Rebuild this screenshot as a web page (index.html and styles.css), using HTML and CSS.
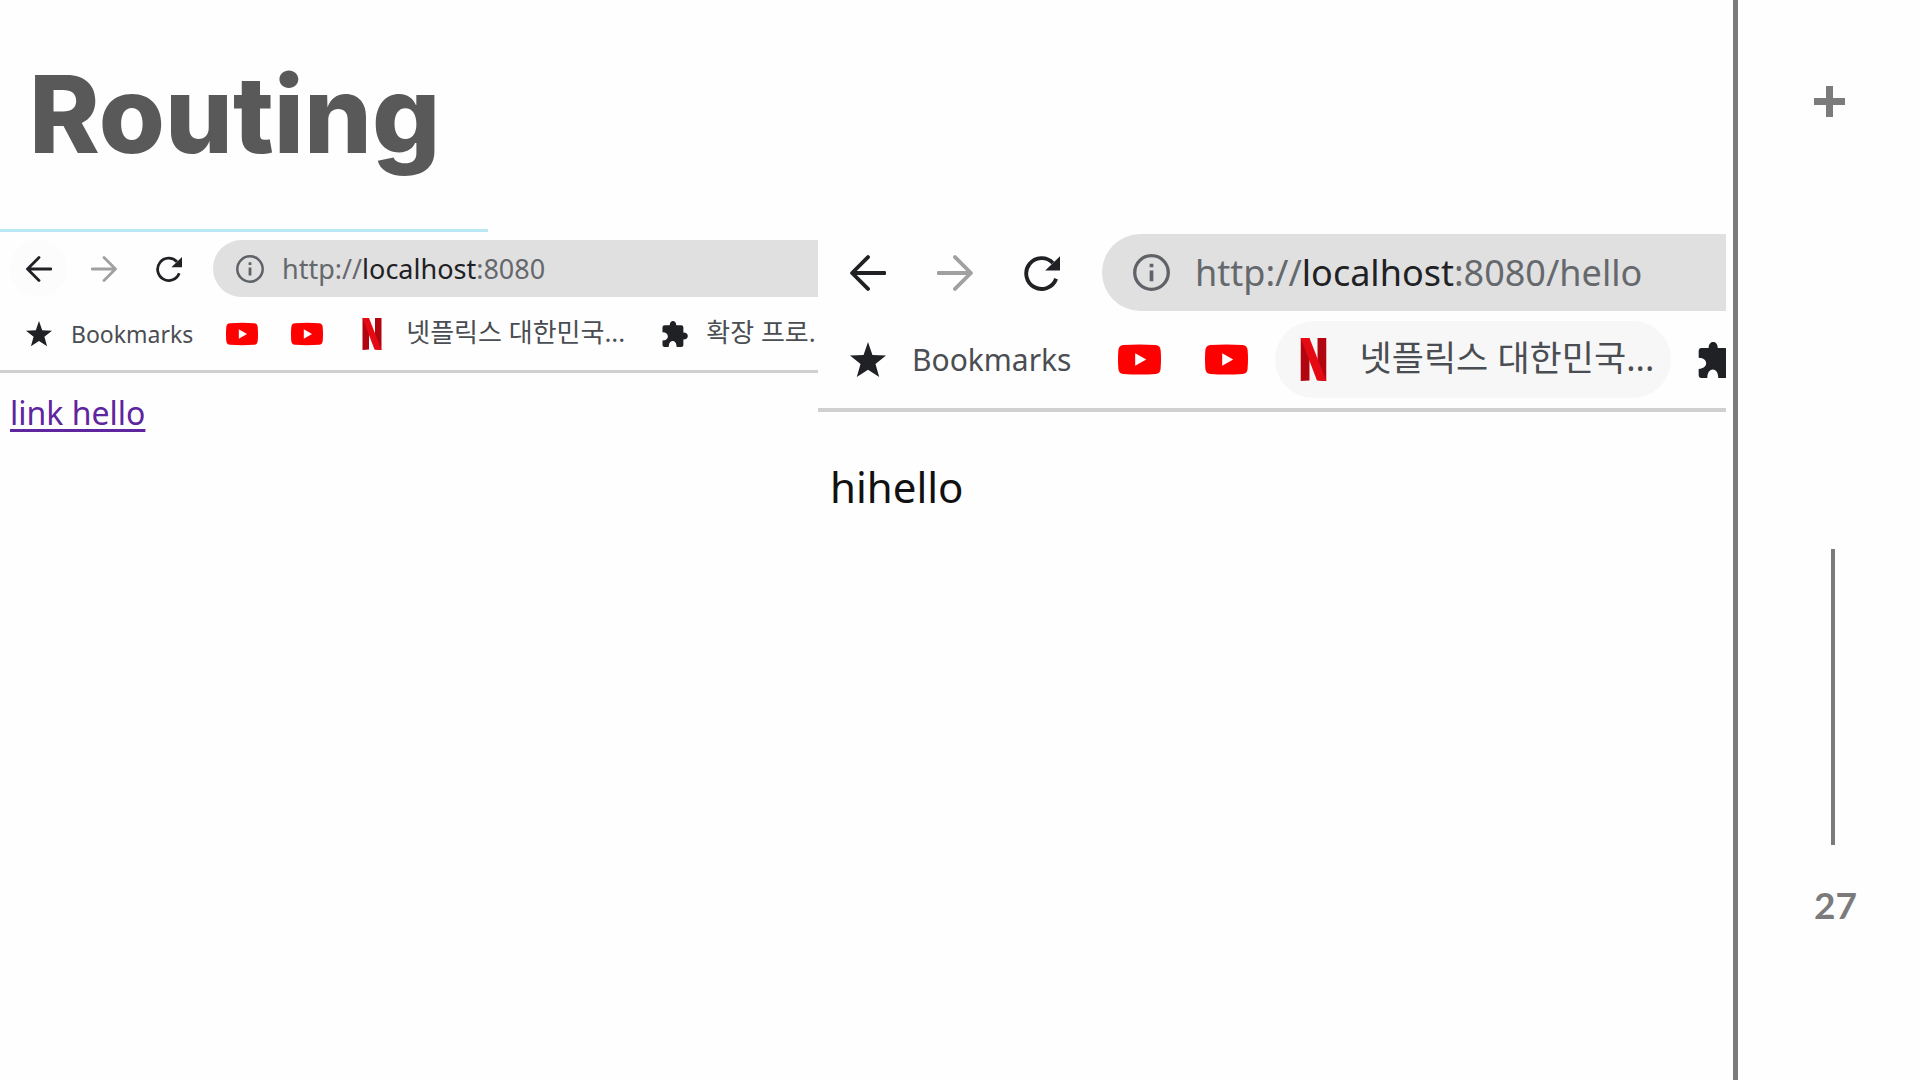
FILE: index.html
```html
<!DOCTYPE html>
<html lang="ko">
<head>
<meta charset="utf-8">
<meta name="viewport" content="width=device-width, initial-scale=1">
<title>Routing</title>
<link rel="stylesheet" href="styles.css">
</head>
<body>
<svg class="sprite" aria-hidden="true">
  <symbol id="back" viewBox="0 0 26 26"><path d="M13 1.500L1.500 13L13 24.500M2 13H25" fill="none" stroke="currentColor" stroke-width="2.800" stroke-linecap="round" stroke-linejoin="round"/></symbol>
  <symbol id="forward" viewBox="0 0 26 26"><path d="M13 1.500L24.500 13L13 24.500M24 13H1" fill="none" stroke="currentColor" stroke-width="2.800" stroke-linecap="round" stroke-linejoin="round"/></symbol>
  <symbol id="reload" viewBox="0 0 28 28"><path d="M22.500 6.200A12 12 0 1 0 25 18.500" fill="none" stroke="currentColor" stroke-width="3"/><path d="M28 1V12H16.500Z" fill="currentColor"/></symbol>
  <symbol id="info" viewBox="0 0 28 28"><circle cx="14" cy="14" r="12.700" fill="none" stroke="currentColor" stroke-width="2.500"/><path d="M12.600 12.400H15.400V20.600H12.600ZM12.600 7.300H15.400V10.100H12.600Z" fill="currentColor"/></symbol>
  <symbol id="star" viewBox="0 0 26 26"><path d="M13 0L16.200 9.300L26 9.700L18.400 15.800L21.100 25.300L13 20L4.900 25.300L7.600 15.800L0 9.700L9.800 9.300Z" fill="currentColor"/></symbol>
  <symbol id="video" viewBox="0 0 32 32"><path d="M4 5.300Q16 4.400 28 5.300Q31.400 5.600 31.700 9Q32.300 16 31.700 23Q31.400 26.400 28 26.800Q16 27.600 4 26.800Q.6 26.400 .3 23Q-.3 16 .3 9Q.6 5.600 4 5.300Z" fill="#f00"/><path d="M12.800 11.300V20.700L21 16Z" fill="#fff"/></symbol>
  <symbol id="netflix" viewBox="0 0 32 32"><path d="M6.500 0H13V31.600L6.500 32ZM19 0H25.500V32L19 31.600Z" fill="#b1060f"/><path d="M6.500 0H13L25.500 32L18.500 31.400Z" fill="#e50914"/></symbol>
  <symbol id="puzzle" viewBox="0 0 27 27"><path d="M8 4.500C8 -1.400 14.800 -1.400 14.800 4.500H20Q22.200 4.500 22.200 6.700V12C28.400 12 28.400 19.200 22.200 19.200V24.800Q22.200 27 20 27H15.200C15.200 18.600 7 18.600 7 27H2.700Q.500 27 .500 24.800V20.200C8 20.200 8 11.800 .500 11.800V6.700Q.500 4.500 2.700 4.500Z" fill="currentColor"/></symbol>
</svg>
<div class="slide">
  <main class="content">
    <h1 class="title">Routing</h1>
    <div class="shots">
      <section class="browser">
        <div class="loading"></div>
        <div class="chrome">
          <div class="toolbar">
            <button class="tool tool-hover" aria-label="Back"><svg class="glyph"><use href="#back"/></svg></button>
            <button class="tool tool-off" aria-label="Forward"><svg class="glyph"><use href="#forward"/></svg></button>
            <button class="tool" aria-label="Reload"><svg class="glyph"><use href="#reload"/></svg></button>
            <div class="address"><svg class="info"><use href="#info"/></svg><span>http://<b class="host">localhost</b>:8080</span></div>
          </div>
          <nav class="bookmarks">
            <a class="mark" href="#"><svg class="glyph"><use href="#star"/></svg><span class="latin">Bookmarks</span></a>
            <a class="mark" href="#" aria-label="YouTube"><svg class="favicon"><use href="#video"/></svg></a>
            <a class="mark" href="#" aria-label="YouTube"><svg class="favicon"><use href="#video"/></svg></a>
            <a class="mark" href="#"><svg class="favicon"><use href="#netflix"/></svg><span class="korean">넷플릭스 대한민국...</span></a>
            <a class="mark" href="#"><svg class="glyph"><use href="#puzzle"/></svg><span class="korean">확장 프로.</span></a>
          </nav>
        </div>
        <div class="page"><a class="visited" href="#">link hello</a></div>
      </section>
      <section class="browser browser-large">
        <div class="chrome">
          <div class="toolbar">
            <button class="tool" aria-label="Back"><svg class="glyph"><use href="#back"/></svg></button>
            <button class="tool tool-off" aria-label="Forward"><svg class="glyph"><use href="#forward"/></svg></button>
            <button class="tool" aria-label="Reload"><svg class="glyph"><use href="#reload"/></svg></button>
            <div class="address"><svg class="info"><use href="#info"/></svg><span>http://<b class="host">localhost</b>:8080/hello</span></div>
          </div>
          <nav class="bookmarks">
            <a class="mark" href="#"><svg class="glyph"><use href="#star"/></svg><span class="latin">Bookmarks</span></a>
            <a class="mark" href="#" aria-label="YouTube"><svg class="favicon"><use href="#video"/></svg></a>
            <a class="mark" href="#" aria-label="YouTube"><svg class="favicon"><use href="#video"/></svg></a>
            <a class="mark mark-hover" href="#"><svg class="favicon"><use href="#netflix"/></svg><span class="korean">넷플릭스 대한민국...</span></a>
            <a class="mark" href="#" aria-label="Extensions"><svg class="glyph"><use href="#puzzle"/></svg></a>
          </nav>
        </div>
        <div class="page">hihello</div>
      </section>
    </div>
  </main>
  <aside class="rail">
    <svg class="plus" viewBox="0 0 31 31" aria-hidden="true"><path d="M12 0H19V12H31V19H19V31H12V19H0V12H12Z" fill="currentColor"/></svg>
    <div class="rule"></div>
    <span class="number">27</span>
  </aside>
</div>
</body>
</html>
```
FILE: styles.css
```css
* { box-sizing: border-box; }

body {
  margin: 0;
  background: #fefefe;
  font-family: "Noto Sans", "Noto Sans CJK KR", sans-serif;
}

.sprite { display: none; }

svg { display: block; flex: none; }

.slide {
  display: flex;
  min-height: 100vh;
}

.content {
  flex: 1;
  min-width: 0;
  padding-right: 7px;
}

.title {
  margin: 0;
  height: 229px;
  padding: 48px 0 0 29px;
  font: 800 107px/132px Inter, sans-serif;
  color: #595959;
}

.shots {
  display: grid;
  grid-template-columns: 818fr 908fr;
}

.browser {
  --tool: 57px;
  --glyph: 26px;
  --favicon: 32px;
  --gap: 8px;
  --inset: 10px;
  --pad: 13px;
  min-width: 0;
  overflow: hidden;
  font-size: 32px;
}

.browser-large {
  --tool: 77px;
  --glyph: 36px;
  --favicon: 43px;
  --gap: 10px;
  --inset: 11px;
  --pad: 17px;
  padding-top: 5px;
  font-size: 42px;
}

.loading {
  width: 488px;
  height: 3px;
  background: #b8e8f4;
}

.chrome {
  display: flex;
  flex-direction: column;
  gap: var(--gap);
  padding: 8px 0;
  border-bottom: 3px solid #d0d0d0;
}

.browser-large .chrome {
  padding: 0 0 10px;
  border-bottom-width: 4px;
}

.toolbar {
  display: flex;
  gap: var(--gap);
  padding-left: var(--inset);
}

.tool {
  display: grid;
  place-items: center;
  flex: none;
  width: var(--tool);
  height: var(--tool);
  padding: 0;
  border: 0;
  border-radius: 50%;
  background: none;
  color: #202124;
}

.tool-hover { background: #fcfcfc; }
.tool-off { color: #a0a0a0; }

.glyph {
  width: var(--glyph);
  height: var(--glyph);
}

.favicon {
  width: var(--favicon);
  height: var(--favicon);
}

.address {
  display: flex;
  flex: 1;
  align-items: center;
  gap: 18px;
  height: var(--tool);
  margin-left: 8px;
  padding-left: 23px;
  border-radius: 40px 0 0 40px;
  background: #e0e0e0;
  color: #65686c;
  font-size: 27px;
  white-space: nowrap;
}

.host {
  font-weight: 400;
  color: #202124;
}

.info {
  width: 28px;
  height: 28px;
  color: #5f6368;
}

.browser-large .address {
  gap: 25px;
  margin-left: 12px;
  padding-left: 31px;
  font-size: 36px;
}

.browser-large .info {
  width: 37px;
  height: 37px;
}

.bookmarks {
  display: flex;
  gap: 7px;
  padding-left: 13px;
}

.browser-large .bookmarks {
  gap: 10px;
  padding-left: 15px;
}

.mark {
  display: flex;
  flex: none;
  align-items: center;
  gap: 18px;
  height: var(--tool);
  padding: 0 var(--pad);
  border-radius: 40px;
  color: #202124;
  text-decoration: none;
  white-space: nowrap;
}

.browser-large .mark { gap: 24px; }
.mark-hover { background: #f7f7f7; }

.latin,
.korean { color: #4a4d51; }

.latin {
  padding-left: 1px;
  font-size: 23px;
}

.korean {
  padding: 0 4px 6px 0;
  font-size: 26px;
}

.browser-large .latin {
  padding: 0 3px 0 2px;
  font-size: 30px;
}

.browser-large .korean {
  padding: 0 0 8px;
  font-size: 35px;
}

.page {
  padding: 18px 10px;
  line-height: 44px;
  color: #111;
}

.browser-large .page {
  padding: 45px 12px;
  line-height: 60px;
}

.visited {
  color: #5f259f;
  text-decoration-thickness: 3px;
  text-underline-offset: 4px;
}

.rail {
  display: flex;
  flex-direction: column;
  align-items: center;
  flex: none;
  width: 187px;
  padding: 86px 0 0 8px;
  border-left: 5px solid #7b7b7b;
  color: #7b7b7b;
}

.plus {
  width: 31px;
  height: 31px;
  margin-right: 8px;
}

.rule {
  width: 4px;
  height: 296px;
  margin-top: 432px;
  background: #7b7b7b;
}

.number {
  margin-top: 36px;
  padding-left: 5px;
  font: 700 37px/48px Lato, sans-serif;
}
```
